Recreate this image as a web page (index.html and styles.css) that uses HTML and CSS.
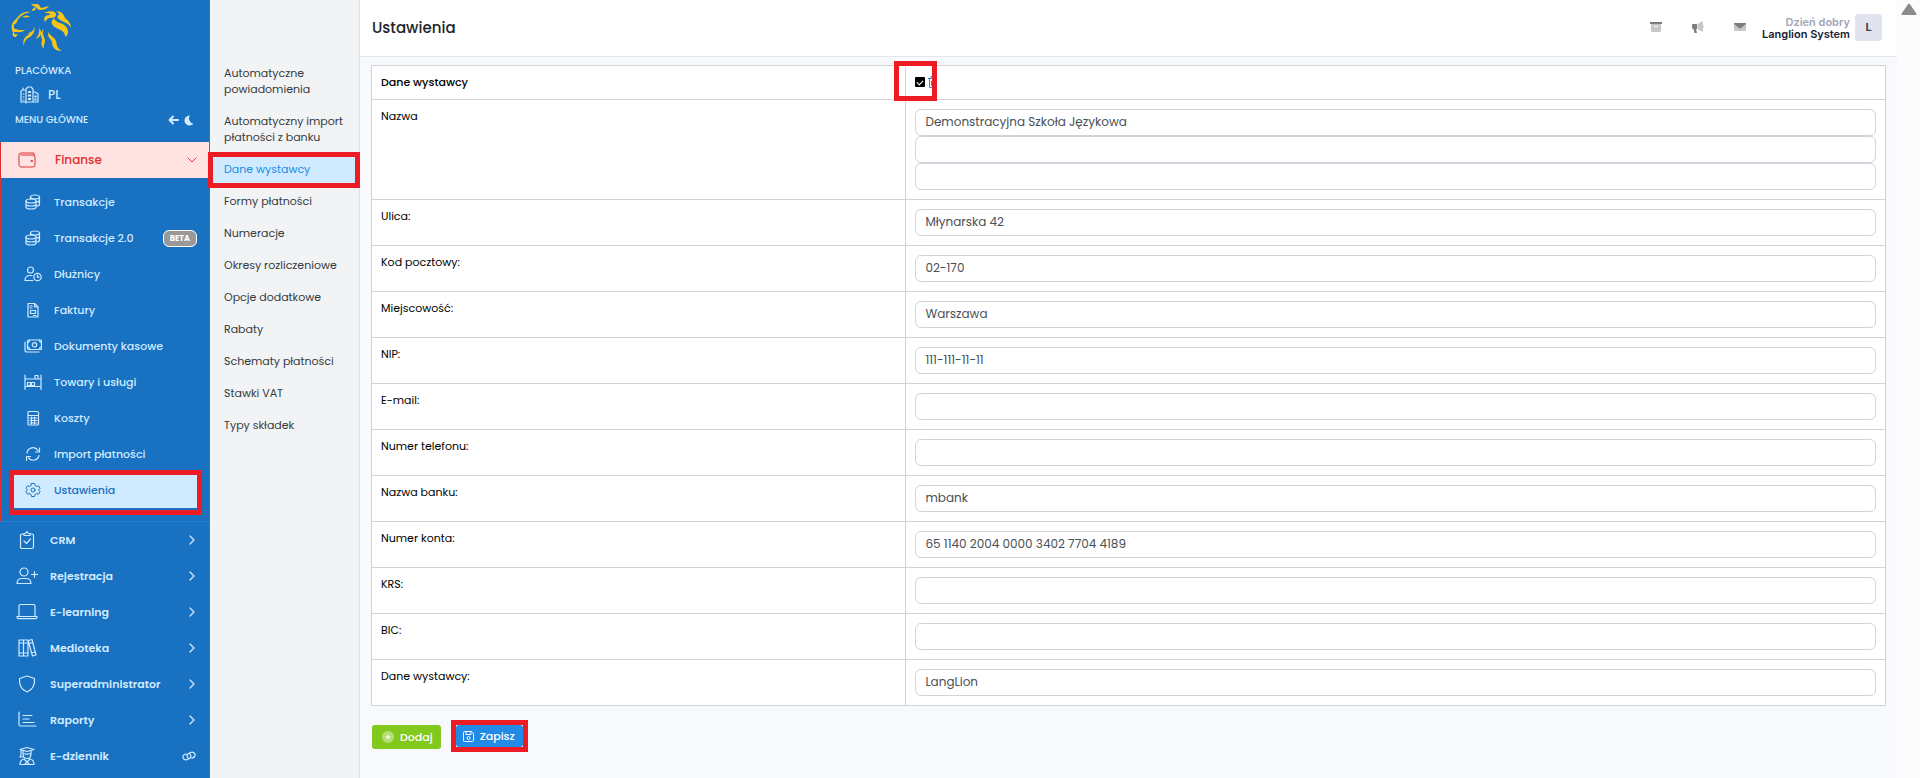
FILE: index.html
```html
<!DOCTYPE html>
<html lang="pl">
<head>
<meta charset="utf-8">
<title>Ustawienia</title>
<link rel="stylesheet" href="styles.css">
</head>
<body>
<div class="app">
  <aside class="sidebar">
    <a class="logo" href="#" aria-label="LangLion">
      <svg width="62" height="50" viewBox="0 0 62 50" fill="#f5c518">
        <path d="M20 2c3 1 6-1 8 1 1 1 1 2 2 3 3-1 5-1 8-2-2 3-6 4-9 4-2 0-3-2-4-3-2-1-4-1-5-3z"/>
        <path d="M25 5c0 3-2 4-4 4 0-2 1-3 4-4z"/>
        <path d="M20 10C13 9 9 12 6 16l-4 4c-1 2-1 3 0 4 1-2 3-2 4-4 1-5 7-9 14-10z"/>
        <path d="M11 15c3-2 6-2 8 0-3 0-5 1-8 0z"/>
        <path d="M1 22c3 1 1 4 3 5 3 1 6 1 10 1-3 3-8 2-11 2 0 2 1 3 4 2l-2 3c-3 0-4-2-3-4-1-3-2-5-1-9z"/>
        <path d="M33 11c5-3 13-2 12 2 0 3-5 3-7 3-2 1-3 2-4 4-2-4 0-7 4-7 3-1 0-2-5-2z"/>
        <path d="M45 9c6 0 8 4 9 7 4 3 6 6 6 10-2-4-5-5-9-7-5-2-6-5-3-6 0-2-1-3-3-4z"/>
        <path d="M43 16c1 6 14 4 14 14 0 2-1 4-3 5 1-8-10-7-13-13-1-2 0-4 2-6z"/>
        <path d="M23 24c2 6-2 10-6 12-3 2-4 4-4 8-2-6 1-9 4-11 4-2 6-4 6-9z"/>
        <path d="M28 26c4 4 2 9-3 11 2-4 4-6 3-11z"/>
        <path d="M17 32c2-2 4-2 6-5-1 5-3 6-6 5z"/>
        <path d="M33 27c-3 5 1 8 1 12 0 3-2 4-1 8-4-4-2-7-2-10-2-4-1-8 2-10z"/>
        <path d="M38 30c0 4 6 5 7 9 1 5 1 7 6 10-8 0-10-5-10-9-1-4-6-5-3-10z"/>
      </svg>
    </a>
    <div class="caption">PLACÓWKA</div>
    <a class="branch" href="#">
      <svg class="ico" width="20" height="18" viewBox="0 0 20 18"><path d="M1 16V5l2-1V2M3 4h3v13M1 16h17V8l-3-2h-2M6 17V3l2-2h3l2 2v13M3 8h1M3 11h1M3 14h1M8.500 5.500h2v1h-2zM8.500 9h2v1h-2zM8.500 12.500h2v1h-2zM15 10h1v1h-1zM15 13h1v1h-1z"/></svg>
      PL
    </a>
    <div class="caption caption-main">MENU GŁÓWNE
      <span class="tools">
        <svg class="ico bold" width="11" height="10" viewBox="0 0 11 10"><path d="M10 5H1.500M5 1.500 1.500 5 5 8.500"/></svg>
        <svg width="10" height="11" viewBox="0 0 10 11" fill="#d0ebff"><path d="M6 .5A5 5 0 1 0 9.500 8.500 5 5 0 0 1 6 .5z"/></svg>
      </span>
    </div>

    <nav>
      <section class="group">
        <a class="group-head" href="#">
          <svg class="ico" width="18" height="16" viewBox="0 0 18 16"><path d="M16 3V1H3a2 2 0 0 0-2 2v10a2 2 0 0 0 2 2h12a2 2 0 0 0 2-2V5a2 2 0 0 0-2-2H3M13.500 8.500h1v1h-1z"/></svg>
          <span>Finanse</span>
          <svg class="ico end" width="10" height="10" viewBox="0 0 10 10"><path d="m1 3 4 4 4-4"/></svg>
        </a>
        <ul class="sub">
          <li><a href="#"><svg class="ico" width="18" height="18" viewBox="0 0 18 18"><g id="coins"><ellipse cx="11" cy="4" rx="4.500" ry="2"/><path d="M6.500 4v2M15.500 4v7c0 1-1 2-3 2M15.500 7c0 1-1 2-3 2"/><ellipse cx="7" cy="8" rx="5" ry="2"/><path d="M2 8v6c0 1.300 2 2 5 2s5-.7 5-2V8M2 11c0 1.300 2 2 5 2s5-.7 5-2"/></g></svg>Transakcje</a></li>
          <li><a href="#"><svg class="ico" width="18" height="18" viewBox="0 0 18 18"><use href="#coins"/></svg>Transakcje 2.0<span class="badge">BETA</span></a></li>
          <li><a href="#"><svg class="ico" width="18" height="18" viewBox="0 0 18 18"><circle cx="6.500" cy="5" r="3"/><path d="M9 15.500H1C1 12 3 10.500 6 10.500h2"/><circle cx="13.500" cy="12" r="3.700"/><path d="M13.500 10v2.200H15"/></svg>Dłużnicy</a></li>
          <li><a href="#"><svg class="ico" width="18" height="18" viewBox="0 0 18 18"><path d="M4 2.500h6.500L14 6v10H4zM10.500 2.500V6H14M6 5h2M6 7h2M6.500 9.500h5v3h-5zM9.500 14.500H12"/></svg>Faktury</a></li>
          <li><a href="#"><svg class="ico" width="18" height="18" viewBox="0 0 18 18"><rect x="3.500" y="3" width="14" height="9.500" rx="1"/><circle cx="10.500" cy="7.800" r="2.200"/><path d="M1 5v8a2 2 0 0 0 2 2h12M3.500 5.500c1.500 0 2-1 2-2.500M17.500 5.500c-1.500 0-2-1-2-2.500M3.500 10c1.500 0 2 1 2 2.500M17.500 10c-1.500 0-2 1-2 2.500"/></svg>Dokumenty kasowe</a></li>
          <li><a href="#"><svg class="ico" width="18" height="18" viewBox="0 0 18 18"><path d="M1 2v14.500M17 2v14.500M1 6h16M1 13.500h16M3.500 9.500h3v3h-3zM7.500 9.500h3v3h-3zM11 2.500h3V6h-3z"/></svg>Towary i usługi</a></li>
          <li><a href="#"><svg class="ico" width="18" height="18" viewBox="0 0 18 18"><rect x="4" y="2.500" width="10.500" height="13.500" rx="1"/><path d="M4 6.500h10.500M6 9h7M6 11.500h7M6 14h7M7.500 8v7M10.500 8v7"/></svg>Koszty</a></li>
          <li><a href="#"><svg class="ico" width="18" height="18" viewBox="0 0 18 18"><path d="M3 8a6 6 0 0 1 11-2.500M15.500 3v4h-4M15 10.500A6 6 0 0 1 4.500 13M2.500 15.500v-4h4"/></svg>Import płatności</a></li>
          <li><a class="current marked" href="#"><svg class="ico" width="18" height="18" viewBox="0 0 18 18"><path d="M7.500 2.500h3l.5 2 1.500.9 2-.6L16 7.400l-1.500 1.500L16 10.600l-1.500 2.600-2-.6-1.500.9-.5 2h-3l-.5-2-1.500-.9-2 .6L2 10.600l1.500-1.700L2 7.400l1.500-2.600 2 .6L7 4.500z"/><circle cx="9" cy="9" r="2"/></svg>Ustawienia</a></li>
        </ul>
      </section>
      <ul class="modules">
        <li><a href="#"><svg class="ico" width="22" height="20" viewBox="0 0 22 20"><path d="M8 4H6a1.500 1.500 0 0 0-1.500 1.500v11A1.500 1.500 0 0 0 6 18.500h10a1.500 1.500 0 0 0 1.500-1.500V5.500A1.500 1.500 0 0 0 16 4h-2M8 3.500h1.500L11 1.500l1.500 2H14v2H8zM8 11l2.500 2.500L14.500 9"/></svg><span>CRM</span><svg class="ico end" width="8" height="10" viewBox="0 0 8 10"><path id="chev" d="m2 1 4 4-4 4"/></svg></a></li>
        <li><a href="#"><svg class="ico" width="22" height="20" viewBox="0 0 22 20"><circle cx="8" cy="6" r="4"/><path d="M1 17.500c0-3.500 2-5 5-5h4c3 0 5 1.500 5 5zM15.500 8.500h6M18.500 5.500v6"/></svg><span>Rejestracja</span><svg class="ico end" width="8" height="10" viewBox="0 0 8 10"><use href="#chev"/></svg></a></li>
        <li><a href="#"><svg class="ico" width="22" height="20" viewBox="0 0 22 20"><path d="M3 13.500V4a1.500 1.500 0 0 1 1.500-1.500h13A1.500 1.500 0 0 1 19 4v9.500M1 14.500h20v.7c0 1-.7 1.500-1.500 1.500h-17C1.700 16.700 1 16 1 15.200z"/></svg><span>E-learning</span><svg class="ico end" width="8" height="10" viewBox="0 0 8 10"><use href="#chev"/></svg></a></li>
        <li><a href="#"><svg class="ico" width="22" height="20" viewBox="0 0 22 20"><path d="M3 2h4.500v16H3zM7.500 2H12v16H7.500zM3 5h9M3 15h9M12.500 2.500l3.500-1 4 15.500-3.500 1-4-14zM13 5.500l3.500-1M15.500 15l3.500-1"/></svg><span>Medioteka</span><svg class="ico end" width="8" height="10" viewBox="0 0 8 10"><use href="#chev"/></svg></a></li>
        <li><a href="#"><svg class="ico" width="22" height="20" viewBox="0 0 22 20"><path d="M11 2l7.500 2.500c.5 6-1.500 11-7.500 13.500C5 15.500 3 10.500 3.500 4.500z"/></svg><span>Superadministrator</span><svg class="ico end" width="8" height="10" viewBox="0 0 8 10"><use href="#chev"/></svg></a></li>
        <li><a href="#"><svg class="ico" width="22" height="20" viewBox="0 0 22 20"><path d="M3 2v12.500A1.500 1.500 0 0 0 4.500 16H20M7 5.500h9M7 9h6M7 12.500h11"/></svg><span>Raporty</span><svg class="ico end" width="8" height="10" viewBox="0 0 8 10"><use href="#chev"/></svg></a></li>
        <li><a href="#"><svg class="ico" width="22" height="20" viewBox="0 0 22 20"><path d="M4 3.500 11 1.500l7 2-7 2zM7 5v3c0 3 1.500 4.500 4 4.500S15 11 15 8V5M7 7.500c3 1 5 1 8 0M5 4v5l-1 2h3M4 18.500c0-4 1.500-5 4-5.500l3 3 3-3c2.500.5 4 1.500 4 5.500zM9 18l2-2 2 2"/></svg><span>E-dziennik</span><svg class="ico end" width="14" height="10" viewBox="0 0 14 10"><path d="M6 7C4.500 5.500 5 3.500 6.500 2.500l2-1C11 .5 13.500 2 13 4.500 12.500 6.500 11 7 9.500 7M8 3c1.500 1.500 1 3.500-.5 4.500l-2 1C3 9.500.5 8 1 5.500 1.500 3.500 3 3 4.500 3"/></svg></a></li>
      </ul>
    </nav>
  </aside>

  <nav class="submenu" aria-label="Ustawienia">
    <a href="#">Automatyczne powiadomienia</a>
    <a href="#">Automatyczny import płatności z banku</a>
    <a class="current marked" href="#">Dane wystawcy</a>
    <a href="#">Formy płatności</a>
    <a href="#">Numeracje</a>
    <a href="#">Okresy rozliczeniowe</a>
    <a href="#">Opcje dodatkowe</a>
    <a href="#">Rabaty</a>
    <a href="#">Schematy płatności</a>
    <a href="#">Stawki VAT</a>
    <a href="#">Typy składek</a>
  </nav>

  <div class="page">
    <header class="topbar">
      <h1>Ustawienia</h1>
      <div class="actions">
        <button type="button" aria-label="Archiwum"><svg width="12" height="12" viewBox="0 0 12 12"><path fill="#7d7d7d" d="M0 1h12v2H0z"/><path fill="#c8c8c8" d="M1 3h10v7a1 1 0 0 1-1 1H2a1 1 0 0 1-1-1z"/><path fill="#fff" d="M4 5h4v1H4z"/></svg></button>
        <button type="button" aria-label="Ogłoszenia"><svg width="12" height="12" viewBox="0 0 12 12"><path fill="#7d7d7d" d="M0 4a1 1 0 0 1 1-1h4v5H4l1 4H2.500L1.500 8A1.500 1.500 0 0 1 0 6.500z"/><path fill="#c8c8c8" d="M5.500 3 11 0v4.500c1.300.2 1.300 2 0 2.300V11L5.500 8z"/></svg></button>
        <button type="button" aria-label="Wiadomości"><svg width="12" height="12" viewBox="0 0 12 12"><rect y="2" width="12" height="8" rx="1" fill="#c8c8c8"/><path fill="#7d7d7d" d="M0 2h12v1L6.500 7.500h-1L0 3z"/></svg></button>
      </div>
      <div class="user">
        <div class="names"><span class="hello">Dzień dobry</span><span>Langlion System</span></div>
        <span class="avatar">L</span>
      </div>
    </header>

    <main>
      <form>
        <table class="form-table">
          <colgroup><col class="col-label"><col></colgroup>
          <thead>
            <tr>
              <th scope="col"><label for="active">Dane wystawcy</label></th>
              <td>
                <span class="toggles marked">
                  <input type="checkbox" id="active" checked>
                  <svg width="9" height="12" viewBox="0 0 9 12" fill="none" stroke="#228be6"><path d="M0 2.500h9M3 2V.5h3V2M1.500 3v8.500h6V3M3.500 5v5M5.500 5v5"/></svg>
                </span>
              </td>
            </tr>
          </thead>
          <tbody>
            <tr><td><label for="n1">Nazwa</label></td><td><input type="text" id="n1" value="Demonstracyjna Szkoła Językowa"><input type="text" aria-label="Nazwa, wiersz 2"><input type="text" aria-label="Nazwa, wiersz 3"></td></tr>
            <tr><td><label for="street">Ulica:</label></td><td><input type="text" id="street" value="Młynarska 42"></td></tr>
            <tr><td><label for="zip">Kod pocztowy:</label></td><td><input type="text" id="zip" value="02-170"></td></tr>
            <tr><td><label for="city">Miejscowość:</label></td><td><input type="text" id="city" value="Warszawa"></td></tr>
            <tr><td><label for="nip">NIP:</label></td><td><input type="text" id="nip" value="111-111-11-11"></td></tr>
            <tr><td><label for="mail">E-mail:</label></td><td><input type="text" id="mail"></td></tr>
            <tr><td><label for="phone">Numer telefonu:</label></td><td><input type="text" id="phone"></td></tr>
            <tr><td><label for="bank">Nazwa banku:</label></td><td><input type="text" id="bank" value="mbank"></td></tr>
            <tr><td><label for="acc">Numer konta:</label></td><td><input type="text" id="acc" value="65 1140 2004 0000 3402 7704 4189"></td></tr>
            <tr><td><label for="krs">KRS:</label></td><td><input type="text" id="krs"></td></tr>
            <tr><td><label for="bic">BIC:</label></td><td><input type="text" id="bic"></td></tr>
            <tr><td><label for="issuer">Dane wystawcy:</label></td><td><input type="text" id="issuer" value="LangLion"></td></tr>
          </tbody>
        </table>
        <div class="buttons">
          <button type="button" class="btn add"><svg width="12" height="12" viewBox="0 0 12 12"><circle cx="6" cy="6" r="6" fill="#fff" opacity=".4"/><path d="M6 3.500v5M3.500 6h5" stroke="#fff"/></svg>Dodaj</button>
          <button type="button" class="btn save marked"><svg width="11" height="11" viewBox="0 0 11 11" fill="none" stroke="#fff"><path d="M1.500.5h7l2 2v7a1 1 0 0 1-1 1h-8a1 1 0 0 1-1-1v-8a1 1 0 0 1 1-1zM3 .5v3h5v-3"/><circle cx="5.500" cy="7" r="1.500"/></svg>Zapisz</button>
        </div>
      </form>
    </main>
  </div>

  <div class="gutter"><svg width="16" height="13" viewBox="0 0 16 13"><path d="M8 1.500 14.500 11h-13z" fill="#8b8b8b" stroke="#8b8b8b" stroke-width="2" stroke-linejoin="round"/></svg></div>
</div>
</body>
</html>
```
FILE: styles.css
```css
* { box-sizing: border-box; }
body { margin: 0; font-family: Poppins, Inter, "Open Sans", sans-serif; font-size: 11px; color: #000; background: #f8f9fc; }
a { color: inherit; text-decoration: none; }
ul { list-style: none; margin: 0; padding: 0; }
button { font-family: inherit; border: 0; background: none; padding: 0; }
svg { display: block; flex: none; }

.app { display: flex; height: 100vh; overflow: hidden; }
.ico { fill: none; stroke: currentColor; stroke-width: 1.2; stroke-linecap: round; stroke-linejoin: round; }
.bold { stroke-width: 2; }

/* red frame drawn over an element */
.marked { position: relative; }
.marked::after { content: ""; position: absolute; inset: -5px; border: 5px solid #ed1c24; pointer-events: none; z-index: 2; }

.sidebar { flex: none; width: 210px; background: #1971c2; border-right: 1px solid #1c7ed6; color: #d0ebff; }
.logo { display: block; padding: 2px 11px 9px; }
.caption { padding: 0 15px; font-size: 10px; line-height: 20px; font-weight: 500; }
.branch { display: flex; align-items: center; gap: 8px; height: 28px; padding-left: 20px; font-size: 12px; font-weight: 500; }
.caption-main { display: flex; justify-content: space-between; align-items: center; height: 22px; margin-bottom: 11px; }
.tools { display: flex; align-items: center; gap: 5px; }

.group { border-left: 1px solid #e03131; border-bottom: 1px solid #1c7ed6; padding-bottom: 13px; }
.group-head { display: flex; align-items: center; gap: 19px; height: 36px; padding: 0 12px 0 17px; background: #ffe3e3; color: #e03131; font-size: 12px; font-weight: 500; }
.group-head .ico, .sub .current .ico { stroke-width: 1; }
.end { margin-left: auto; }
.sub { padding: 6px 12px 0; }
.sub a { display: flex; align-items: center; gap: 12px; height: 36px; padding: 0 0 0 11px; font-weight: 500; font-size: 11px; }
.sub .current { background: #d0ebff; color: #1971c2; }
.sub .marked::after { inset: -2px -5px -7px -4px; }
.badge { margin-left: auto; padding: 0 6px; border: 1px solid #fff; border-radius: 6px; background: #999; color: #fff; font-size: 8px; line-height: 15px; font-weight: 700; }
.modules a { display: flex; align-items: center; gap: 12px; height: 36px; padding: 0 13px 0 16px; font-weight: 600; font-size: 11px; }

.submenu { flex: none; width: 150px; padding-top: 57px; background: #f1f3f5; border-right: 1px solid #dee2e6; color: #343a40; }
.submenu a { display: block; padding: 8px 14px; line-height: 16px; }
.submenu .current { background: #d0ebff; color: #228be6; }
.submenu .marked::after { inset: -1px -1px -3px -2px; }

.page { flex: 1; min-width: 0; }
.topbar { display: flex; align-items: center; height: 57px; padding: 0 15px 1px 12px; background: #fff; border-bottom: 1px solid #e4e8ee; }
.topbar h1 { flex: 1; margin: 0; font-size: 15px; line-height: 24px; font-weight: 500; color: #212529; }
.actions { display: flex; gap: 30px; margin-right: 16px; padding-bottom: 2px; }
.user { display: flex; align-items: center; gap: 5px; font-family: Inter, sans-serif; }
.names { display: flex; flex-direction: column; align-items: flex-end; line-height: 12px; font-weight: 600; color: #181c32; }
.hello { color: #a1a5b7; }
.avatar { width: 27px; border-radius: 3px; background: #e1e3ee; line-height: 27px; text-align: center; font-weight: 700; color: #3f4254; }

main { padding: 8px 11px; }
.form-table { width: 100%; table-layout: fixed; border-collapse: collapse; background: #fff; }
.col-label { width: 35.3%; }
.form-table th, .form-table td { border: 1px solid #ced4da; padding: 9px; vertical-align: top; text-align: left; line-height: 15px; }
.form-table th { font-weight: 500; }
.form-table label { display: block; }
.toggles { display: inline-flex; align-items: center; gap: 3px; height: 13px; vertical-align: top; }
.toggles::after { inset: -14px 0 -13px -21px; }
input[type="checkbox"] { appearance: none; width: 10px; height: 10px; margin: 0; border-radius: 1px; background: #000; display: grid; place-items: center; }
input[type="checkbox"]:checked::before { content: ""; width: 5px; height: 3px; border: solid #fff; border-width: 0 0 1px 1px; transform: rotate(-45deg); }
input[type="text"] { display: block; width: 100%; height: 27px; padding: 0 9px 1px; border: 1px solid #ced4da; border-radius: 6px; background: #fff; font: 400 12px Poppins, Inter, "Open Sans", sans-serif; color: #495057; }

.buttons { display: flex; gap: 15px; padding: 19px 1px; }
.btn { display: flex; align-items: center; height: 24px; border-radius: 3px; color: #fff; font-size: 11px; font-weight: 500; }
.add { gap: 6px; padding: 0 8px 0 10px; background: #82c91e; }
.save { height: 22px; gap: 6px; padding: 0 8px 0 7px; background: #228be6; }

.gutter { flex: none; width: 23px; padding: 3px 4px; background: #fcfcfc; }
```
